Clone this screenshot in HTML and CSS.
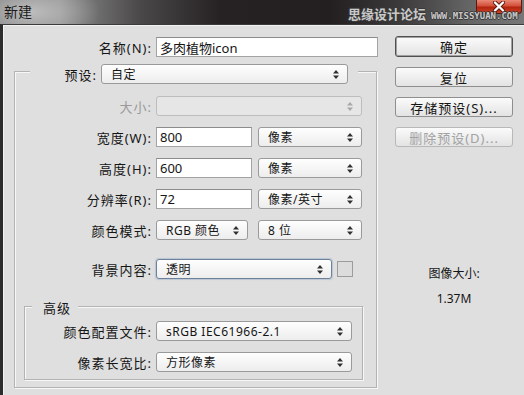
FILE: index.html
```html
<!doctype html>
<html lang="zh-CN">
<head>
    <meta charset="UTF-8">
    <title>新建</title>
    <link rel="stylesheet" href="styles.css">
</head>
<body>

<div class="window">
    <div class="titlebar">
        <span class="title">新建</span>
        <div class="close">
            <svg width="18" height="11" viewBox="0 0 18 11">
                <path d="M5 1.5L13 9.5M13 1.5L5 9.5" stroke="#5a1208" stroke-width="4" stroke-linecap="round"/>
                <path d="M5 1.5L13 9.5M13 1.5L5 9.5" stroke="#fff" stroke-width="2.4" stroke-linecap="round"/>
            </svg>
        </div>
        <div class="watermark">
            <span class="wm-cn">思缘设计论坛</span>
            <span class="wm-en">WWW.MISSYUAN.COM</span>
        </div>
    </div>

    <div class="frame">
        <div class="main">
            <div class="row">
                <span class="lbl">名称(N):</span>
                <div class="input w-name">多肉植物icon</div>
            </div>

            <div class="group outer">
                <div class="group-head preset">
                    <span class="lbl">预设:</span>
                    <div class="select w-preset">
                        <span>自定</span>
                        <svg class="arrows" width="6" height="9" viewBox="0 0 6 9"><path d="M3 0L6 3.5H0Z M3 9L0 5.5H6Z"/></svg>
                    </div>
                </div>

                <div class="row first">
                    <span class="lbl disabled">大小:</span>
                    <div class="select disabled w-size">
                        <span></span>
                        <svg class="arrows" width="6" height="9" viewBox="0 0 6 9"><path d="M3 0L6 3.5H0Z M3 9L0 5.5H6Z"/></svg>
                    </div>
                </div>

                <div class="row">
                    <span class="lbl">宽度(W):</span>
                    <div class="input w-num">800</div>
                    <div class="select w-unit">
                        <span>像素</span>
                        <svg class="arrows" width="6" height="9" viewBox="0 0 6 9"><path d="M3 0L6 3.5H0Z M3 9L0 5.5H6Z"/></svg>
                    </div>
                </div>

                <div class="row">
                    <span class="lbl">高度(H):</span>
                    <div class="input w-num">600</div>
                    <div class="select w-unit">
                        <span>像素</span>
                        <svg class="arrows" width="6" height="9" viewBox="0 0 6 9"><path d="M3 0L6 3.5H0Z M3 9L0 5.5H6Z"/></svg>
                    </div>
                </div>

                <div class="row">
                    <span class="lbl">分辨率(R):</span>
                    <div class="input w-num">72</div>
                    <div class="select w-unit">
                        <span>像素/英寸</span>
                        <svg class="arrows" width="6" height="9" viewBox="0 0 6 9"><path d="M3 0L6 3.5H0Z M3 9L0 5.5H6Z"/></svg>
                    </div>
                </div>

                <div class="row">
                    <span class="lbl">颜色模式:</span>
                    <div class="select w-mode">
                        <span>RGB 颜色</span>
                        <svg class="arrows" width="6" height="9" viewBox="0 0 6 9"><path d="M3 0L6 3.5H0Z M3 9L0 5.5H6Z"/></svg>
                    </div>
                    <div class="select w-bits">
                        <span>8 位</span>
                        <svg class="arrows" width="6" height="9" viewBox="0 0 6 9"><path d="M3 0L6 3.5H0Z M3 9L0 5.5H6Z"/></svg>
                    </div>
                </div>

                <div class="row bg-row">
                    <span class="lbl">背景内容:</span>
                    <div class="select focused w-bg">
                        <span>透明</span>
                        <svg class="arrows" width="6" height="9" viewBox="0 0 6 9"><path d="M3 0L6 3.5H0Z M3 9L0 5.5H6Z"/></svg>
                    </div>
                    <div class="swatch"></div>
                </div>

                <div class="group inner">
                    <div class="group-head adv">高级</div>

                    <div class="row first">
                        <span class="lbl">颜色配置文件:</span>
                        <div class="select w-adv">
                            <span>sRGB IEC61966-2.1</span>
                            <svg class="arrows" width="6" height="9" viewBox="0 0 6 9"><path d="M3 0L6 3.5H0Z M3 9L0 5.5H6Z"/></svg>
                        </div>
                    </div>

                    <div class="row">
                        <span class="lbl">像素长宽比:</span>
                        <div class="select w-adv">
                            <span>方形像素</span>
                            <svg class="arrows" width="6" height="9" viewBox="0 0 6 9"><path d="M3 0L6 3.5H0Z M3 9L0 5.5H6Z"/></svg>
                        </div>
                    </div>
                </div>
            </div>
        </div>

        <div class="side">
            <div class="btn default">确定</div>
            <div class="btn">复位</div>
            <div class="btn">存储预设(S)...</div>
            <div class="btn disabled">删除预设(D)...</div>

            <div class="info">
                <div class="info-title">图像大小:</div>
                <div class="info-value">1.37M</div>
            </div>
        </div>
    </div>
</div>

</body>
</html>
```

FILE: styles.css
```css
html, body {
    margin: 0;
    padding: 0;
}

body {
    width: 524px;
    height: 395px;
    overflow: hidden;
    background: #dfdfdf;
    font-family: "Noto Sans", "Noto Sans CJK SC", sans-serif;
    font-size: 12px;
    color: #151515;
}

.window {
    height: 395px;
    display: flex;
    flex-direction: column;
}

/* title bar */

.titlebar {
    position: relative;
    height: 24px;
    flex: 0 0 24px;
    display: flex;
    align-items: flex-start;
    background:
        radial-gradient(ellipse 70px 30px at 30px 12px, rgba(200, 200, 200, .85), rgba(200, 200, 200, 0)),
        linear-gradient(90deg, #7c7c7c 0, #8f8f8f 60px, #4a4848 140px, #262224 220px, #231f21 330px, #3c3a3b 400px, #666 470px, #777 524px);
}

.title {
    margin: 4px 0 0 4px;
    font-size: 14px;
    line-height: 16px;
    color: #1b1b1b;
}

.close {
    margin: 0 2px 0 auto;
    width: 44px;
    height: 13px;
    border: 1px solid #5a1a12;
    border-top: 0;
    border-radius: 0 0 4px 4px;
    background: linear-gradient(#e98876 0, #d2503a 45%, #b3240f 55%, #c94126 100%);
    display: flex;
    align-items: center;
    justify-content: center;
}

.watermark {
    position: absolute;
    left: 348px;
    top: 6px;
    display: flex;
    align-items: baseline;
    gap: 5px;
    pointer-events: none;
}

.wm-cn {
    font-size: 13px;
    font-weight: bold;
    line-height: 16px;
    color: #c9c9c9;
    text-shadow: -1px 0 #3a3a3a, 1px 0 #3a3a3a, 0 -1px #3a3a3a, 0 1px #3a3a3a;
}

.wm-en {
    font-family: "DejaVu Sans Mono", monospace;
    font-size: 9px;
    font-weight: bold;
    color: #c9c9c9;
    text-shadow: -1px 0 #3a3a3a, 1px 0 #3a3a3a, 0 -1px #3a3a3a, 0 1px #3a3a3a;
}

/* dialog body */

.frame {
    flex: 1;
    display: flex;
    align-items: flex-start;
    border-left: 3px solid #2c2c2c;
    border-top: 1px solid #3a3a3a;
    box-shadow: inset 1px 1px 0 #f2f2f2;
    padding-top: 12px;
}

.main {
    width: 375px;
    flex: 0 0 375px;
}

.row {
    display: flex;
    align-items: center;
    height: 20px;
    margin-top: 11px;
}

.main > .row {
    margin-top: 0;
}

.row.first {
    margin-top: 12px;
}

.inner .row.first {
    margin-top: 6px;
}

.row.bg-row {
    margin-top: 19px;
}

.lbl {
    flex: 0 0 auto;
    width: 149px;
    margin-right: 4px;
    text-align: right;
    font-size: 13px;
    letter-spacing: 1px;
    white-space: nowrap;
}

.outer .lbl {
    width: 137px;
}

.inner .lbl {
    width: 127px;
}

.lbl.disabled {
    color: #9a9a9a;
}

/* group boxes */

.group {
    box-sizing: border-box;
    border: 1px solid #b3b3b3;
    box-shadow: inset 1px 1px 0 #f7f7f7, 1px 1px 0 #f7f7f7;
}

.outer {
    margin: 14px 0 0 11px;
    width: 363px;
    padding-bottom: 7px;
}

.inner {
    margin: 27px 0 0 9px;
    width: 339px;
    padding-bottom: 7px;
}

.group-head {
    background: #dfdfdf;
    display: flex;
    align-items: center;
}

.group-head.preset {
    margin: -8px 0 0 15px;
    width: 328px;
    height: 20px;
}

.group-head.preset .lbl {
    width: 67px;
}

.group-head.adv {
    margin: -8px 0 0 7px;
    padding: 0 7px 0 11px;
    width: max-content;
    height: 16px;
    font-size: 13px;
    letter-spacing: 1px;
}

/* controls */

.input, .select {
    box-sizing: border-box;
    height: 20px;
    display: flex;
    align-items: center;
    flex: 0 0 auto;
    white-space: nowrap;
}

.input {
    border: 1px solid #a3a3a3;
    border-top-color: #8c8c8c;
    background: #fff;
    padding-left: 3px;
    font-size: 13px;
}

.select {
    border: 1px solid #9a9a9a;
    border-radius: 3px;
    background: linear-gradient(#fefefe, #ededed);
    padding: 0 8px 0 9px;
    justify-content: space-between;
    letter-spacing: .5px;
}

.select .arrows {
    fill: #2f2f2f;
    flex: 0 0 auto;
}

.select.disabled {
    background: #e6e6e6;
    border-color: #bdbdbd;
}

.select.disabled .arrows {
    fill: #a8a8a8;
}

.select.focused {
    border-color: #6e819a;
    box-shadow: 0 0 1px 1px rgba(120, 150, 190, .35);
}

.swatch {
    box-sizing: border-box;
    width: 16px;
    height: 16px;
    margin-left: 5px;
    border: 1px solid #9c9c9c;
    background: #dcdcdc;
}

.w-name { width: 222px; }
.w-preset { width: 247px; }
.w-size { width: 206px; }
.w-num { width: 96px; margin-right: 6px; }
.w-unit { width: 104px; }
.w-mode { width: 92px; margin-right: 10px; }
.w-bits { width: 104px; }
.w-bg { width: 176px; }
.w-adv { width: 196px; }

/* right side */

.side {
    margin: -1px 0 0 17px;
    width: 118px;
    display: flex;
    flex-direction: column;
    gap: 10px;
}

.btn {
    box-sizing: border-box;
    height: 20px;
    border: 1px solid #8f8f8f;
    border-radius: 3px;
    background: linear-gradient(#fbfbfb, #e3e3e3);
    display: flex;
    align-items: center;
    justify-content: center;
    font-size: 13px;
    letter-spacing: 1px;
}

.btn.default {
    height: 21px;
    border-color: #505050;
    box-shadow: inset 0 0 0 1px #a0a0a0;
}

.btn.disabled {
    color: #a2a2a2;
    border-color: #b8b8b8;
}

.info {
    margin-top: 109px;
    text-align: center;
    line-height: 16px;
}

.info-value {
    margin-top: 9px;
}
```
